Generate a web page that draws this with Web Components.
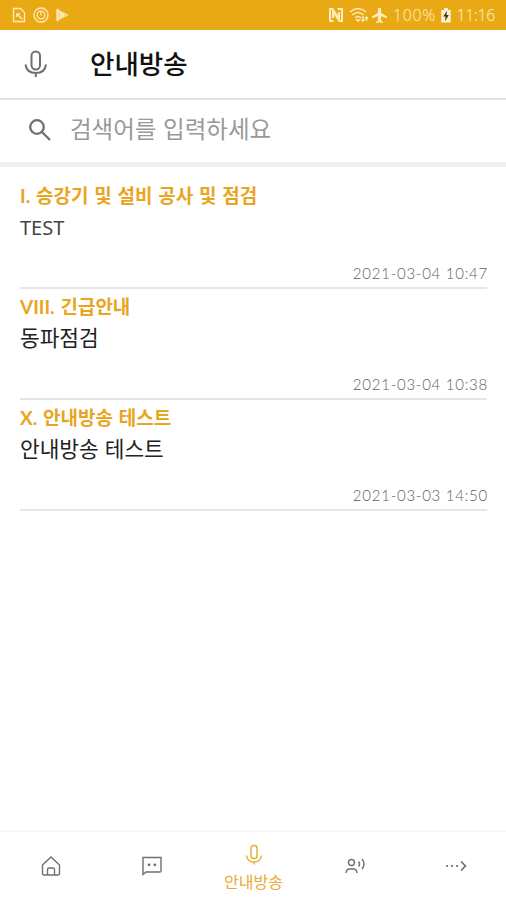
<!DOCTYPE html>
<html lang="ko">
<head>
<meta charset="utf-8">
<title>안내방송</title>
<style>
    body {margin: 0;background: #fff;font-family: "Noto Sans CJK KR", sans-serif;}
</style>
</head>
<body>
<notice-app></notice-app>
<script>
const ICONS = {
    sim: ['0 0 14 16', '<path d="M1.5 1.5h7l4 4v9h-11z"/><path d="M10.5 11.5H9.500L5 7M4.800 10V6.800h3.500"/>'],
    circle: ['0 0 16 16', '<circle cx="8" cy="8" r="7"/><circle cx="8" cy="8" r="3.800"/><path d="M8 5v3.500"/>'],
    play: ['0 0 14 14', '<path fill="currentColor" fill-opacity=".7" stroke="none" d="M1 1v12l12-6z"/><path d="m1 1 7 8M1 13l7-8M1 1v12"/>'],
    nfc: ['0 0 16 16', '<path stroke-width="2" d="M5.500 14H2V2h2.500l6.500 9.500V5"/><path stroke-width="2" d="M9.500 2H14v12h-2.500L5 4.500V11"/>'],
    wifi: ['0 0 20 16', '<path stroke-width="1.6" d="M1 5q8-7 16 0M3.500 8q5.500-5 11 0M6 11q3-3 6 0M8 13l1 1 1-1z"/><path d="M14 9v5m-1.500-1.500L14 14l1.500-1.500M17.500 14V10m-1.500 1.500 1.500-1.500 1.500 1.500"/>'],
    plane: ['0 0 16 16', '<path fill="currentColor" stroke="none" d="M15 10.500V9L9.500 5.500V2Q9.500.7 8 .7T6.500 2v3.500L1 9v1.500l5.500-1.700v3.700L4.800 14v1.200L8 14.300l3.200.9V14l-1.700-1.500V8.800z"/>'],
    battery: ['0 0 10 16', '<path fill="#fff4d2" stroke="none" d="M3 0h4v2h3v13.500H0V2h3z"/><path fill="#443506" stroke="none" d="M6 3 2 9h2.500L4 14l4-6.500H5.500z"/>'],
    mic: ['0 0 24 28', '<rect x="7.500" y="1.500" width="8.500" height="18" rx="4.250"/><path d="M1.500 14.500q1.200 8.500 10.300 8.500T22 14.500M11.800 23v4"/>'],
    micSmall: ['0 0 18 22', '<rect x="6" y="1.500" width="6" height="13" rx="2.500"/><path d="M1.500 11.500q1 6.500 7.500 6.500t7.500-6.500M9 18v2.500"/>'],
    search: ['0 0 24 24', '<circle cx="9" cy="9" r="6.800"/><path d="m14 14 8 8"/>'],
    home: ['0 0 20 20', '<path d="M1.500 9 10 1l8.500 8v8.500q0 1.500-1.500 1.500H3q-1.500 0-1.500-1.500z"/><path d="M6.500 19v-5.500q0-1.500 1.500-1.500h4q1.500 0 1.500 1.500V19"/>'],
    chat: ['0 0 20 20', '<path d="M1 1.500h18V15q0 1-1 1H4l-3 2.500z"/><path stroke-width="2.800" stroke-linecap="round" d="M7 8.800h.1M12.800 8.800h.1"/>'],
    voice: ['0 0 20 16', '<circle cx="6.500" cy="4.500" r="3"/><path d="M1 15q.4-4 3.500-4h4q3.100 0 3.500 4M13.500 3.500q2 2.500 0 5M17 1q4 4.800 0 10"/>'],
    more: ['0 0 22 12', '<path stroke-width="2.200" stroke-linecap="round" d="M2 6h.1M7 6h.1M12 6h.1"/><path stroke-width="1.700" d="m16 1.500 4.500 4.500L16 10.500"/>']
};

const setRoot = (el, html) => {
    el.attachShadow({ mode: 'open' }).innerHTML = html;
};

customElements.define('app-icon', class extends HTMLElement {
    connectedCallback() {
        const [box, shapes] = ICONS[this.getAttribute('name')];
        setRoot(this,
            `<style>
                :host {display: block;flex: none;}
                svg {display: block;width: 100%;height: 100%;fill: none;stroke: currentColor;stroke-width: var(--stroke, 1.3);}
            </style>
            <svg viewBox="${box}">${shapes}</svg>`
        );
    }
});

customElements.define('status-bar', class extends HTMLElement {
    constructor() {
        super();
        setRoot(this,
            `<style>
                :host {display: flex;align-items: center;justify-content: space-between;height: 30px;padding: 0 11px 0 12px;box-sizing: border-box;background: #e9a915;color: #ffebbb;font: 300 16px/30px "Noto Sans", sans-serif;}
                div {display: flex;align-items: center;}
                .left {gap: 7px;}
                .percent {margin-left: 5px;width: 46px;letter-spacing: .6px;}
                .time {margin-left: 4px;width: 39px;text-align: right;letter-spacing: -.4px;white-space: nowrap;}
            </style>
            <div class="left">
                <app-icon name="sim" style="width:14px;height:16px"></app-icon>
                <app-icon name="circle" style="width:16px;height:16px"></app-icon>
                <app-icon name="play" style="width:14px;height:14px"></app-icon>
            </div>
            <div>
                <app-icon name="nfc" style="width:16px;height:16px"></app-icon>
                <app-icon name="wifi" style="width:20px;height:16px;margin-left:5px"></app-icon>
                <app-icon name="plane" style="width:17px;height:17px;margin-left:2px"></app-icon>
                <span class="percent">100%</span>
                <app-icon name="battery" style="width:10px;height:15px;margin:0 1px 0 2px"></app-icon>
                <span class="time">11:16</span>
            </div>`
        );
    }
});

customElements.define('page-header', class extends HTMLElement {
    constructor() {
        super();
        setRoot(this,
            `<style>
                :host {display: flex;align-items: center;gap: 42px;height: 70px;padding: 0 0 2px 24px;box-sizing: border-box;border-bottom: 2px solid #e0e0e0;color: #111;font-size: 26.5px;font-weight: 500;line-height: 40px;}
                app-icon {width: 24px;height: 28px;color: #707070;--stroke: 2;margin-top: 2px;}
            </style>
            <app-icon name="mic"></app-icon>
            <slot></slot>`
        );
    }
});

customElements.define('search-field', class extends HTMLElement {
    constructor() {
        super();
        setRoot(this,
            `<style>
                :host {display: flex;align-items: center;gap: 18px;height: 67px;padding: 0 0 7px 28px;box-sizing: border-box;border-bottom: 5px solid #f0f0f0;color: #999;font-size: 23.5px;line-height: 34px;}
                app-icon {width: 24px;height: 24px;color: #707070;--stroke: 2.3;margin-top: 4px;}
            </style>
            <app-icon name="search"></app-icon>
            <slot></slot>`
        );
    }
});

customElements.define('notice-item', class extends HTMLElement {
    constructor() {
        super();
        setRoot(this,
            `<style>
                :host {display: flex;flex-direction: column;height: 111px;box-sizing: border-box;border-bottom: 2px solid #e6e6e6;}
                .category {height: 28px;color: #e9a51e;font: 700 19px/28px Lato, "Noto Sans CJK KR", sans-serif;word-spacing: 1.2px;padding-top: 4px;}
                .body {height: 32px;color: #222;font-size: 21.4px;line-height: 32px;}
                .date {margin-top: auto;padding-bottom: 1px;text-align: right;color: #606060;font: 300 15px/26px Lato, sans-serif;letter-spacing: .75px;margin-right: -1px;}
            </style>
            <div class="category"><slot name="category"></slot></div>
            <div class="body"><slot></slot></div>
            <div class="date"><slot name="date"></slot></div>`
        );
    }
});

customElements.define('nav-item', class extends HTMLElement {
    constructor() {
        super();
        setRoot(this,
            `<style>
                :host {display: flex;flex-direction: column;align-items: center;justify-content: center;color: #707070;font-size: 16px;line-height: 24px;--stroke: 1.4;}
                :host([active]) {color: #e8aa35;gap: 3px;padding: 4px 0 0 1px;}
            </style>
            <slot name="icon"></slot>
            <slot></slot>`
        );
    }
});

customElements.define('tab-bar', class extends HTMLElement {
    constructor() {
        super();
        setRoot(this,
            `<style>
                :host {display: grid;grid-template-columns: 101px 101px 102px 101px 101px;height: 70px;box-sizing: border-box;border-top: 2px solid #f6f6f6;}
            </style>
            <slot></slot>`
        );
    }
});

customElements.define('notice-app', class extends HTMLElement {
    constructor() {
        super();
        setRoot(this,
            `<style>
                :host {display: flex;flex-direction: column;height: 900px;overflow: hidden;}
                main {flex: 1;padding: 11px 19px 0 20px;}
            </style>
            <status-bar></status-bar>
            <page-header>안내방송</page-header>
            <search-field>검색어를 입력하세요</search-field>
            <main>
                <notice-item>
                    <span slot="category">I. 승강기 및 설비 공사 및 점검</span>
                    <span style="font:20px/28px 'Noto Sans', sans-serif;color:#444">TEST</span>
                    <span slot="date">2021-03-04 10:47</span>
                </notice-item>
                <notice-item>
                    <span slot="category">VIII. 긴급안내</span>동파점검
                    <span slot="date">2021-03-04 10:38</span>
                </notice-item>
                <notice-item>
                    <span slot="category">X. 안내방송 테스트</span>안내방송 테스트
                    <span slot="date">2021-03-03 14:50</span>
                </notice-item>
            </main>
            <tab-bar>
                <nav-item><app-icon slot="icon" name="home" style="width:20px;height:20px"></app-icon></nav-item>
                <nav-item><app-icon slot="icon" name="chat" style="width:20px;height:20px"></app-icon></nav-item>
                <nav-item active><app-icon slot="icon" name="micSmall" style="width:18px;height:22px"></app-icon>안내방송</nav-item>
                <nav-item><app-icon slot="icon" name="voice" style="width:20px;height:16px"></app-icon></nav-item>
                <nav-item><app-icon slot="icon" name="more" style="width:22px;height:12px"></app-icon></nav-item>
            </tab-bar>`
        );
    }
});
</script>
</body>
</html>
